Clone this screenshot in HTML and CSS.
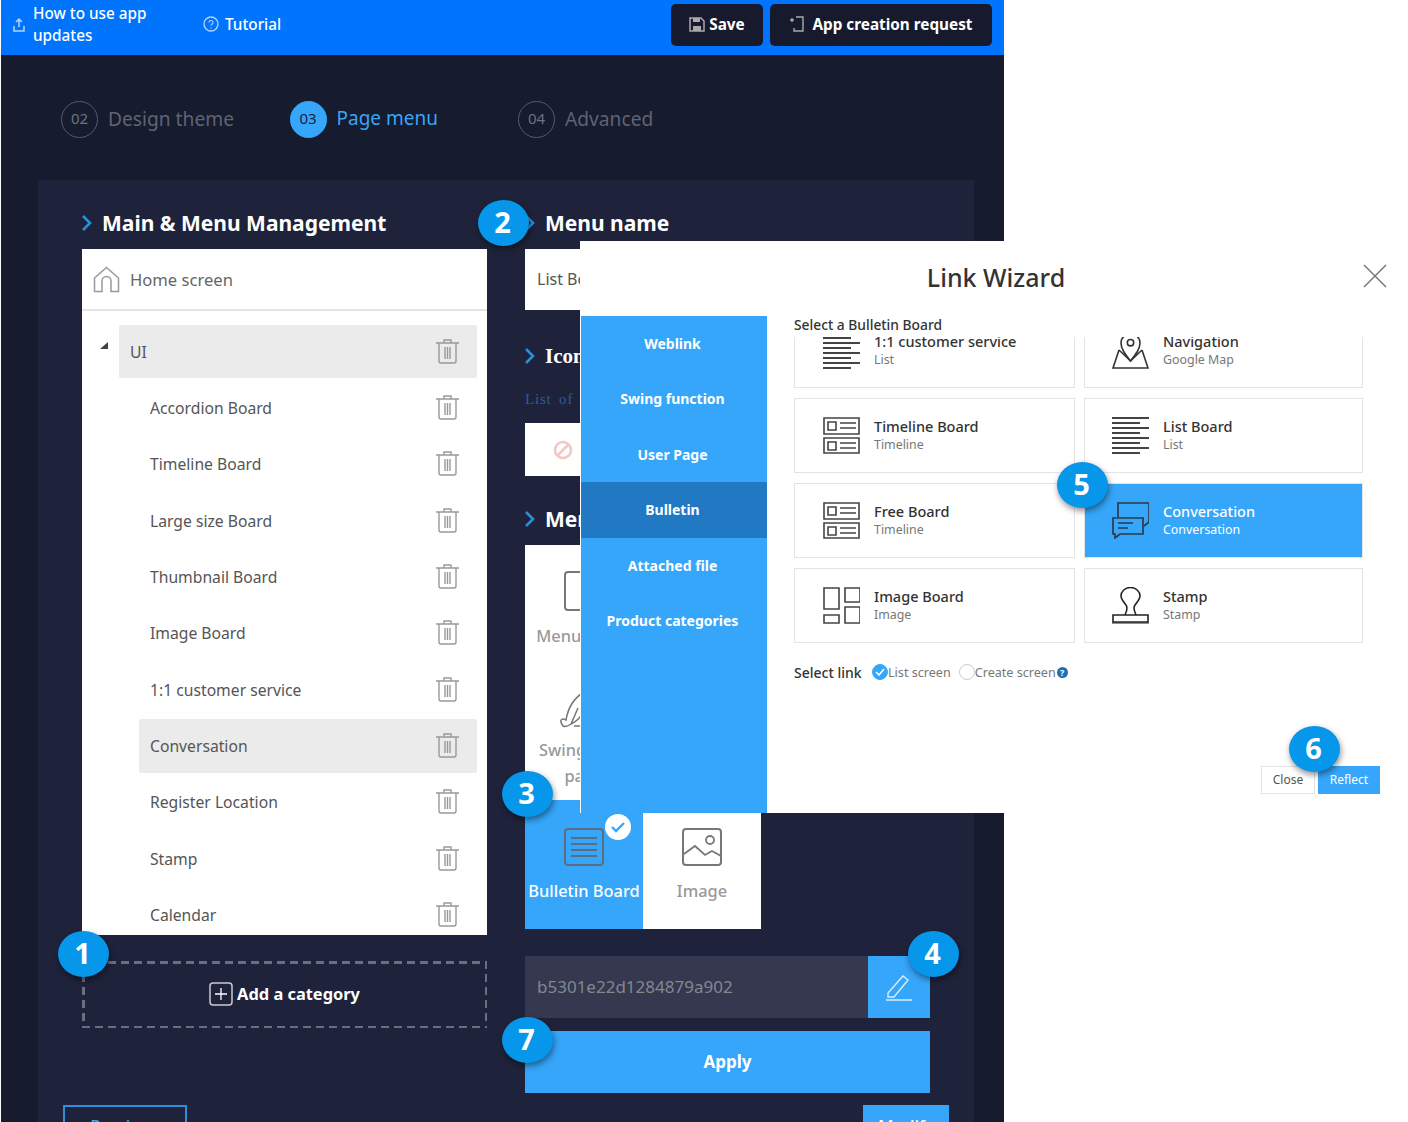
FILE: index.html
```html
<!DOCTYPE html>
<html lang="en">
<head>
    <meta charset="UTF-8">
    <meta name="viewport" content="width=device-width, initial-scale=1.0">
    <title>Link Wizard</title>
    <link rel="stylesheet" href="styles.css">
</head>
<body>
    <svg class="sprite" width="0" height="0">
        <symbol id="i-trash" viewBox="0 0 23 26"><g fill="none" stroke="currentColor" stroke-width="1.4"><path d="M0 5h23M8 5V2h7v3M3 5v18a2 2 0 0 0 2 2h13a2 2 0 0 0 2-2V5"/><path d="M9 9v12M11.500 9v12M14 9v12"/></g></symbol>
        <symbol id="i-chev" viewBox="0 0 11 18"><path d="M2 2l7 7-7 7" fill="none" stroke="currentColor" stroke-width="2.6"/></symbol>
        <symbol id="i-list" viewBox="0 0 37 37"><g stroke="#444" stroke-width="1.800"><path d="M0 1h37M0 6h28M0 11h37M0 16h28M0 21h37M0 26h28M0 31h37M0 36h28"/></g></symbol>
        <symbol id="i-time" viewBox="0 0 37 37"><g fill="none" stroke="#444" stroke-width="1.600"><path d="M1 1h35v16H1zM1 21h35v15H1zM5 5h8v8H5zM5 25h8v8H5z"/><path d="M17 6h16M17 11h16M17 26h16M17 31h16"/></g></symbol>
        <symbol id="i-grid" viewBox="0 0 37 37"><g fill="none" stroke="#444" stroke-width="1.600"><path d="M1 1h15v21H1zM22 1h15v14H22zM1 28h15v8H1zM22 20h15v16H22z"/></g></symbol>
        <symbol id="i-map" viewBox="0 0 37 37"><g fill="none" stroke="#333" stroke-width="1.600"><path d="M18.500 29C13 22 9 17 9 11a9.500 9.500 0 0 1 19 0C28 17 24 22 18.500 29z"/><circle cx="18.500" cy="10.700" r="3.200"/><path d="M7 18L1 36h35l-6-18M7 18l11.500 11L30 18"/></g></symbol>
        <symbol id="i-chat" viewBox="0 0 37 37"><g fill="none" stroke="#2b3a4a" stroke-width="1.700"><path d="M6 15V1h31v19l-5 4"/><path d="M1 16h30v16H8l-5 4v-4H1z"/><path d="M6 21h15M6 26h10"/></g></symbol>
        <symbol id="i-stamp" viewBox="0 0 37 37"><g fill="none" stroke="#222" stroke-width="1.600"><path d="M13 28C15 24 16 21 14 18C11 14 9 12 9 9A9.500 8.500 0 0 1 28 9C28 12 26 14 23 18C21 21 22 24 24 28"/><path d="M1 28h35v7H1z"/><path d="M0 36h37" stroke-width="1.200"/></g></symbol>
    </svg>

    <div class="app">
        <header class="topbar">
            <div class="top-link top-updates">
                <svg width="12" height="15" viewBox="0 0 12 15"><path d="M6 10V2M3 5l3-3 3 3M1 9v5h10V9" fill="none" stroke="#b8d4fb" stroke-width="1.500"/></svg>
                <span>How to use app<br>updates</span>
            </div>
            <div class="top-link top-tutorial">
                <svg width="16" height="16" viewBox="0 0 16 16"><circle cx="8" cy="8" r="7" fill="none" stroke="#b8d4fb" stroke-width="1.300"/><path d="M6 6.500a2 2 0 1 1 3 1.700c-.8.500-1 .8-1 1.600M8 11.500v1" fill="none" stroke="#b8d4fb" stroke-width="1.100"/></svg>
                <span>Tutorial</span>
            </div>
            <button class="top-btn btn-save">
                <svg width="16" height="15" viewBox="0 0 16 15"><path d="M1 1h11l3 3v10H1z" fill="none" stroke="#aaa" stroke-width="1.500"/><path d="M4 1h7v4H4zM4 9h8v5H4z" fill="#aaa"/></svg>
                Save
            </button>
            <button class="top-btn btn-request">
                <svg width="15" height="16" viewBox="0 0 15 16"><path d="M7 1h7v14H5v-3M1 4h4M3 2v4" fill="none" stroke="#aaa" stroke-width="1.400"/></svg>
                App creation request
            </button>
        </header>

        <nav class="steps">
            <div class="step"><span class="step-num">02</span><span class="step-label">Design theme</span></div>
            <div class="step active"><span class="step-num">03</span><span class="step-label">Page menu</span></div>
            <div class="step"><span class="step-num">04</span><span class="step-label">Advanced</span></div>
        </nav>

        <main class="panel">
            <div class="columns">
                <section>
                    <h2 class="sec-title"><svg class="chev"><use href="#i-chev"/></svg>Main &amp; Menu Management</h2>
                    <div class="menu-list">
                        <div class="home-row">
                            <svg width="27" height="27" viewBox="0 0 27 27"><path d="M1.500 12L13.500 1.500 25.500 12v13.500H18V15a4.500 4.500 0 0 0-9 0v10.500H1.500z" fill="none" stroke="#999" stroke-width="1.500"/></svg>
                            <span>Home screen</span>
                        </div>
                        <div class="cat-row">
                            <span class="caret"></span>
                            <div class="row-box selected">UI<svg class="trash"><use href="#i-trash"/></svg></div>
                        </div>
                        <div class="sub-row"><div class="row-box">Accordion Board<svg class="trash"><use href="#i-trash"/></svg></div></div>
                        <div class="sub-row"><div class="row-box">Timeline Board<svg class="trash"><use href="#i-trash"/></svg></div></div>
                        <div class="sub-row"><div class="row-box">Large size Board<svg class="trash"><use href="#i-trash"/></svg></div></div>
                        <div class="sub-row"><div class="row-box">Thumbnail Board<svg class="trash"><use href="#i-trash"/></svg></div></div>
                        <div class="sub-row"><div class="row-box">Image Board<svg class="trash"><use href="#i-trash"/></svg></div></div>
                        <div class="sub-row"><div class="row-box">1:1 customer service<svg class="trash"><use href="#i-trash"/></svg></div></div>
                        <div class="sub-row"><div class="row-box selected">Conversation<svg class="trash"><use href="#i-trash"/></svg></div></div>
                        <div class="sub-row"><div class="row-box">Register Location<svg class="trash"><use href="#i-trash"/></svg></div></div>
                        <div class="sub-row"><div class="row-box">Stamp<svg class="trash"><use href="#i-trash"/></svg></div></div>
                        <div class="sub-row"><div class="row-box">Calendar<svg class="trash"><use href="#i-trash"/></svg></div></div>
                    </div>
                    <div class="add-cat">
                        <svg width="24" height="24" viewBox="0 0 24 24"><rect x="1" y="1" width="22" height="22" rx="3" fill="none" stroke="#c9cad2" stroke-width="1.500"/><path d="M12 6v12M6 12h12" stroke="#fff" stroke-width="1.300"/></svg>
                        Add a category
                    </div>
                </section>

                <section>
                    <h2 class="sec-title"><svg class="chev"><use href="#i-chev"/></svg>Menu name</h2>
                    <div class="name-input">List Board</div>

                    <h2 class="sec-title serif sec-icon"><svg class="chev"><use href="#i-chev"/></svg>Icon</h2>
                    <p class="icon-note">List of icons</p>
                    <div class="icon-box">
                        <svg width="20" height="20" viewBox="0 0 20 20"><circle cx="10" cy="10" r="8" fill="none" stroke="#f6c6c6" stroke-width="2.600"/><path d="M4.500 15.500l11-11" stroke="#f6c6c6" stroke-width="2.600"/></svg>
                    </div>

                    <h2 class="sec-title sec-type"><svg class="chev"><use href="#i-chev"/></svg>Menu type</h2>
                    <div class="type-grid">
                        <div class="type-cell">
                            <svg width="40" height="40" viewBox="0 0 40 40"><rect x="1" y="1" width="38" height="38" rx="3" fill="none" stroke="#777" stroke-width="2"/></svg>
                            <span>Menu board</span>
                        </div>
                        <div class="type-cell"></div>
                        <div class="type-cell type-swing">
                            <svg width="48" height="40" viewBox="0 0 48 40"><path d="M3 36C-1 31 1 27 6 30C8 18 14 8 24 2C28 14 24 28 11 34C8 36 5 37 3 36zM11 34L18 18M14 36h12" fill="none" stroke="#777" stroke-width="1.500"/></svg>
                            <span>Swing push page</span>
                        </div>
                        <div class="type-cell"></div>
                        <div class="type-cell type-low type-on">
                            <span class="type-check"><svg width="16" height="12" viewBox="0 0 16 12"><path d="M2 6l4 4 8-8" fill="none" stroke="#36a6fa" stroke-width="2.400"/></svg></span>
                            <svg width="40" height="38" viewBox="0 0 40 38"><rect x="1" y="1" width="38" height="36" rx="3" fill="none" stroke="#5d6c7e" stroke-width="2"/><path d="M7 10h26M7 16h26M7 22h26M7 28h26" stroke="#5d6c7e" stroke-width="1.800"/></svg>
                            <span>Bulletin Board</span>
                        </div>
                        <div class="type-cell type-low">
                            <svg width="40" height="38" viewBox="0 0 40 38"><rect x="1" y="1" width="38" height="36" rx="3" fill="none" stroke="#777" stroke-width="2"/><circle cx="28" cy="12" r="4" fill="none" stroke="#777" stroke-width="1.800"/><path d="M2 26l11-8 10 9 7-4 9 5" fill="none" stroke="#777" stroke-width="1.800"/></svg>
                            <span>Image</span>
                        </div>
                    </div>
                    <div class="code-row">
                        <div class="code-val">b5301e22d1284879a902</div>
                        <div class="code-edit">
                            <svg width="28" height="28" viewBox="0 0 28 28"><path d="M3 20L18 3l5 4L9 24H3zM1 27h26" fill="none" stroke="#d9eefd" stroke-width="1.400"/></svg>
                        </div>
                    </div>
                    <button class="apply">Apply</button>
                </section>
            </div>
            <div class="page-btns">
                <button class="btn-prev">Previous</button>
                <button class="btn-next">Modify</button>
            </div>
        </main>
    </div>

    <!-- ventana del asistente, encima de la pagina -->
    <div class="modal">
        <div class="modal-head">
            <h1>Link Wizard</h1>
            <svg class="modal-x" width="24" height="24" viewBox="0 0 24 24"><path d="M1 1l22 22M23 1L1 23" stroke="#777" stroke-width="1.500"/></svg>
        </div>
        <div class="modal-body">
            <ul class="side-nav">
                <li>Weblink</li>
                <li>Swing function</li>
                <li>User Page</li>
                <li class="current">Bulletin</li>
                <li>Attached file</li>
                <li>Product categories</li>
            </ul>
            <div class="wizard">
                <div class="wizard-title">Select a Bulletin Board</div>
                <div class="card-scroll">
                    <div class="cards">
                        <div class="card"><svg class="card-icon"><use href="#i-list"/></svg><div><b>1:1 customer service</b><small>List</small></div></div>
                        <div class="card"><svg class="card-icon"><use href="#i-map"/></svg><div><b>Navigation</b><small>Google Map</small></div></div>
                        <div class="card"><svg class="card-icon"><use href="#i-time"/></svg><div><b>Timeline Board</b><small>Timeline</small></div></div>
                        <div class="card"><svg class="card-icon"><use href="#i-list"/></svg><div><b>List Board</b><small>List</small></div></div>
                        <div class="card"><svg class="card-icon"><use href="#i-time"/></svg><div><b>Free Board</b><small>Timeline</small></div></div>
                        <div class="card card-on"><svg class="card-icon"><use href="#i-chat"/></svg><div><b>Conversation</b><small>Conversation</small></div></div>
                        <div class="card"><svg class="card-icon"><use href="#i-grid"/></svg><div><b>Image Board</b><small>Image</small></div></div>
                        <div class="card"><svg class="card-icon"><use href="#i-stamp"/></svg><div><b>Stamp</b><small>Stamp</small></div></div>
                    </div>
                </div>
                <div class="link-row">
                    <b>Select link</b>
                    <span class="radio radio-on"><svg width="10" height="8" viewBox="0 0 10 8"><path d="M1 4l3 3 5-6" fill="none" stroke="#fff" stroke-width="1.600"/></svg></span>
                    <span class="radio-text">List screen</span>
                    <span class="radio"></span>
                    <span class="radio-text">Create screen</span>
                    <span class="help">?</span>
                </div>
                <div class="wizard-foot">
                    <button class="foot-close">Close</button>
                    <button class="foot-reflect">Reflect</button>
                </div>
            </div>
        </div>
    </div>

    <div class="badge badge-1">1</div>
    <div class="badge badge-2">2</div>
    <div class="badge badge-3">3</div>
    <div class="badge badge-4">4</div>
    <div class="badge badge-5">5</div>
    <div class="badge badge-6">6</div>
    <div class="badge badge-7">7</div>
</body>
</html>
```

FILE: styles.css
```css
* {
    box-sizing: border-box;
}

html, body {
    margin: 0;
    height: 1122px;
    overflow: hidden;
    background: #fff;
}

body {
    position: relative;
    font-family: "Noto Sans", "Open Sans", sans-serif;
    color: #555;
}

button {
    font-family: inherit;
    border: none;
    cursor: pointer;
}

.sprite {
    position: absolute;
}

.app {
    width: 1003px;
    height: 1122px;
    margin-left: 1px;
    background-color: #161b2e;
    overflow: hidden;
}

/* barra superior */
.topbar {
    display: flex;
    align-items: center;
    height: 55px;
    padding-bottom: 5px;
    background-color: #0074fd;
    color: #fff;
    font-size: 15.300px;
    font-weight: 500;
}

.top-link {
    display: flex;
    align-items: center;
}

.top-updates {
    width: 202px;
    padding-left: 12px;
    gap: 8px;
    line-height: 22px;
    margin-top: -2px;
}

.top-tutorial {
    gap: 6px;
    margin-top: -2px;
}

.top-btn {
    display: flex;
    align-items: center;
    justify-content: center;
    gap: 4px;
    height: 42px;
    padding-bottom: 3px;
    background-color: #171a2c;
    color: #fff;
    border-radius: 5px;
    font-size: 15.300px;
    font-weight: 700;
}

.btn-save {
    width: 92px;
    margin-left: auto;
}

.btn-request {
    width: 222px;
    margin: 0 12px 0 7px;
    gap: 8px;
}

/* pasos */
.steps {
    display: flex;
    height: 125px;
    padding: 46px 0 0 60px;
}

.step {
    display: flex;
    align-items: center;
    gap: 10px;
    width: 228.500px;
    height: 37px;
}

.step-num {
    width: 37px;
    height: 37px;
    border: 1.500px solid #555a6b;
    border-radius: 50%;
    text-align: center;
    line-height: 33px;
    font-size: 15px;
    color: #6d7180;
}

.step-label {
    margin-top: -3px;
    font-size: 19.200px;
    color: #5f6373;
}

.step.active .step-num {
    background-color: #36a6fa;
    border-color: #36a6fa;
    color: #14233f;
}

.step.active .step-label {
    color: #36a6fa;
    font-size: 19px;
}

/* panel principal */
.panel {
    width: 936px;
    height: 942px;
    margin-left: 37px;
    padding-top: 29px;
    background-color: #1e233b;
}

.columns {
    display: grid;
    grid-template-columns: 405px 405px;
    gap: 38px;
    padding: 0 44px;
}

.sec-title {
    display: flex;
    align-items: center;
    gap: 10px;
    height: 30px;
    margin: 0 0 10px;
    padding-bottom: 2px;
    font-size: 21px;
    font-weight: 700;
    color: #fff;
}

.sec-title.serif {
    padding-bottom: 0;
    font-family: "Liberation Serif", serif;
}

.chev {
    width: 11px;
    height: 18px;
    margin-left: -1px;
    color: #2b8fd8;
}

.menu-list {
    height: 686px;
    background-color: #fff;
    overflow: hidden;
    font-size: 15.700px;
}

.home-row {
    display: flex;
    align-items: center;
    gap: 10px;
    height: 62px;
    padding-left: 11px;
    border-bottom: 2px solid #e4e4e4;
    font-size: 16.600px;
    color: #666;
}

.cat-row {
    display: flex;
    align-items: center;
    height: 53px;
    margin: 14px 0 2px;
    padding-left: 18px;
}

.caret {
    width: 0;
    height: 0;
    margin: -12px 11px 0 0;
    border-left: 8px solid transparent;
    border-bottom: 7px solid #444;
}

.sub-row {
    display: flex;
    align-items: center;
    height: 56.300px;
    padding-left: 57px;
}

.row-box {
    display: flex;
    align-items: center;
    justify-content: space-between;
    flex: 1;
    height: 54px;
    margin-right: 10px;
    padding: 0 18px 0 11px;
    border-radius: 2px;
    color: #555;
}

.cat-row .row-box {
    height: 53px;
}

.row-box.selected {
    background-color: #ebebeb;
}

.trash {
    width: 23px;
    height: 26px;
    margin-top: -2px;
    color: #999;
}

.add-cat {
    display: flex;
    align-items: center;
    justify-content: center;
    gap: 4px;
    height: 67px;
    margin-top: 26px;
    padding-bottom: 2px;
    background-image:
        linear-gradient(90deg, #6b6e80 8px, transparent 8px),
        linear-gradient(90deg, #6b6e80 8px, transparent 8px),
        linear-gradient(#6b6e80 8px, transparent 8px),
        linear-gradient(#6b6e80 8px, transparent 8px);
    background-repeat: repeat-x, repeat-x, repeat-y, repeat-y;
    background-size: 13px 2.500px, 13px 2.500px, 2.500px 13px, 2.500px 13px;
    background-position: 0 0, 0 100%, 0 0, 100% 0;
    font-size: 16.400px;
    font-weight: 700;
    color: #fff;
}

.name-input {
    height: 61px;
    padding-left: 12px;
    background-color: #fff;
    line-height: 61px;
    font-size: 16px;
    color: #555;
}

.sec-icon {
    margin: 31px 0 0;
}

.icon-note {
    height: 18px;
    margin: 19px 0 15px;
    font-family: "Liberation Serif", serif;
    font-size: 15px;
    line-height: 18px;
    letter-spacing: 0.800px;
    word-spacing: 3px;
    color: #2a5d94;
}

.icon-box {
    display: flex;
    align-items: center;
    height: 53px;
    padding-left: 28px;
    background-color: #fff;
}

.sec-type {
    margin: 29px 0 10px;
}

.type-grid {
    display: grid;
    grid-template-columns: 118px 118px;
    grid-template-rows: 127.500px 127.500px 129px;
    background-color: #fff;
    width: 236px;
}

.type-cell {
    position: relative;
    display: flex;
    flex-direction: column;
    align-items: center;
    padding-top: 26px;
    text-align: center;
    font-size: 16.400px;
    font-weight: 500;
    line-height: 26px;
    color: #999;
}

.type-cell svg {
    margin-bottom: 12px;
    flex-shrink: 0;
}

.type-swing {
    padding-top: 17px;
}

.type-swing svg {
    margin-bottom: 7px;
}

.type-low {
    padding-top: 28px;
}

.type-low svg {
    margin-bottom: 12px;
}

.type-on {
    background-color: #36a6fa;
    color: #fff;
    white-space: nowrap;
}

.type-check {
    position: absolute;
    top: 14px;
    right: 12px;
    display: flex;
    align-items: center;
    justify-content: center;
    width: 26px;
    height: 26px;
    background-color: #fff;
    border-radius: 50%;
}

.type-cell .type-check svg {
    margin: 0;
}

.code-row {
    display: flex;
    height: 62px;
    margin-top: 27px;
}

.code-val {
    flex: 1;
    padding-left: 12px;
    background-color: #35384f;
    line-height: 61px;
    font-size: 17px;
    color: #85878f;
}

.code-edit {
    display: flex;
    align-items: center;
    justify-content: center;
    width: 62px;
    background-color: #36a6fa;
}

.apply {
    display: block;
    width: 100%;
    height: 62px;
    margin-top: 13px;
    padding-bottom: 3px;
    background-color: #36a6fa;
    color: #fff;
    font-size: 17px;
    font-weight: 700;
}

.page-btns {
    display: flex;
    justify-content: space-between;
    margin-top: 12px;
    padding: 0 25px;
}

.btn-prev, .btn-next {
    display: flex;
    justify-content: center;
    height: 50px;
    font-size: 17px;
    font-weight: 500;
    line-height: 24px;
}

.btn-prev {
    width: 124px;
    padding-top: 7px;
    background: none;
    border: 2px solid #2f8fdc;
    color: #36a6fa;
}

.btn-next {
    width: 86px;
    padding-top: 9px;
    background-color: #36a6fa;
    color: #fff;
}

/* ventana Link Wizard */
.modal {
    position: absolute;
    top: 241px;
    left: 580px;
    width: 828px;
    height: 572px;
    background-color: #fff;
}

.modal-head {
    position: relative;
    height: 74.500px;
    padding-top: 16px;
    padding-left: 4px;
    text-align: center;
}

.modal-head h1 {
    margin: 0;
    font-size: 25px;
    font-weight: 500;
    line-height: 40px;
    color: #333;
}

.modal-x {
    position: absolute;
    top: 23px;
    right: 21px;
}

.modal-body {
    display: flex;
    height: 497.500px;
}

.side-nav {
    width: 187px;
    margin: 0;
    padding: 0 0 0 1px;
    list-style: none;
    background: linear-gradient(#36a6fa, #36a6fa) 1px 0 no-repeat;
    font-size: 14px;
    font-weight: 700;
    color: #fff;
    text-align: center;
}

.side-nav li {
    height: 55.600px;
    padding-right: 3px;
    line-height: 56px;
}

.side-nav .current {
    background-color: #2179c4;
}

.wizard {
    width: 641px;
    padding-left: 27px;
}

.wizard-title {
    height: 21.500px;
    font-size: 13.800px;
    font-weight: 500;
    line-height: 18px;
    color: #333;
}

.card-scroll {
    height: 313px;
    overflow: hidden;
}

.cards {
    display: grid;
    grid-template-columns: 281px 279px;
    grid-auto-rows: 75px;
    gap: 10px 9px;
    margin-top: -24px;
}

.card {
    display: flex;
    align-items: center;
    gap: 14px;
    padding-left: 28px;
    border: 1.500px solid #e4e4e4;
}

.card:nth-child(even) {
    padding-left: 27px;
}

.card-icon {
    width: 37px;
    height: 37px;
    flex-shrink: 0;
}

.card b {
    display: block;
    margin-top: -1px;
    font-size: 14.500px;
    font-weight: 500;
    line-height: 19px;
    color: #333;
}

.card small {
    display: block;
    font-size: 12.400px;
    line-height: 17px;
    color: #777;
}

.card-on {
    background-color: #36a6fa;
    border-color: #e4e4e4;
}

.card-on b, .card-on small {
    color: #fff;
}

.link-row {
    display: flex;
    align-items: center;
    height: 26px;
    margin-top: 9px;
    font-size: 12.600px;
    color: #777;
}

.link-row b {
    width: 78px;
    font-size: 14px;
    font-weight: 500;
    color: #333;
}

.radio {
    display: flex;
    align-items: center;
    justify-content: center;
    width: 16px;
    height: 16px;
    border: 1.500px solid #ccc;
    border-radius: 50%;
}

.radio-on {
    background-color: #36a6fa;
    border-color: #36a6fa;
}

.radio-text {
    margin-right: 8px;
    white-space: nowrap;
}

.help {
    width: 11px;
    height: 11px;
    margin-left: -7px;
    background-color: #1e6eb5;
    border-radius: 50%;
    text-align: center;
    font-size: 9px;
    font-weight: 700;
    line-height: 11px;
    color: #fff;
}

.wizard-foot {
    display: flex;
    justify-content: flex-end;
    gap: 3px;
    margin-top: 81px;
    padding-right: 28px;
}

.foot-close, .foot-reflect {
    height: 28px;
    padding-bottom: 2px;
    font-size: 12px;
}

.foot-close {
    width: 54px;
    background-color: #fff;
    border: 1px solid #e5e5e5;
    color: #555;
}

.foot-reflect {
    width: 62px;
    background-color: #36a6fa;
    color: #fff;
}

/* marcadores numerados */
.badge {
    position: absolute;
    width: 51px;
    height: 46px;
    padding-right: 2px;
    background-color: #0696ea;
    border-radius: 50%;
    box-shadow: 1px 3px 6px rgba(0, 0, 0, 0.45);
    text-align: center;
    font-size: 29px;
    font-weight: 700;
    line-height: 44px;
    color: #fff;
}

.badge-1 { left: 58px; top: 931px; }
.badge-2 { left: 478px; top: 200px; }
.badge-3 { left: 502px; top: 771px; }
.badge-4 { left: 908px; top: 931px; }
.badge-5 { left: 1057px; top: 462px; }
.badge-6 { left: 1289px; top: 726px; }
.badge-7 { left: 502px; top: 1017px; }
```
